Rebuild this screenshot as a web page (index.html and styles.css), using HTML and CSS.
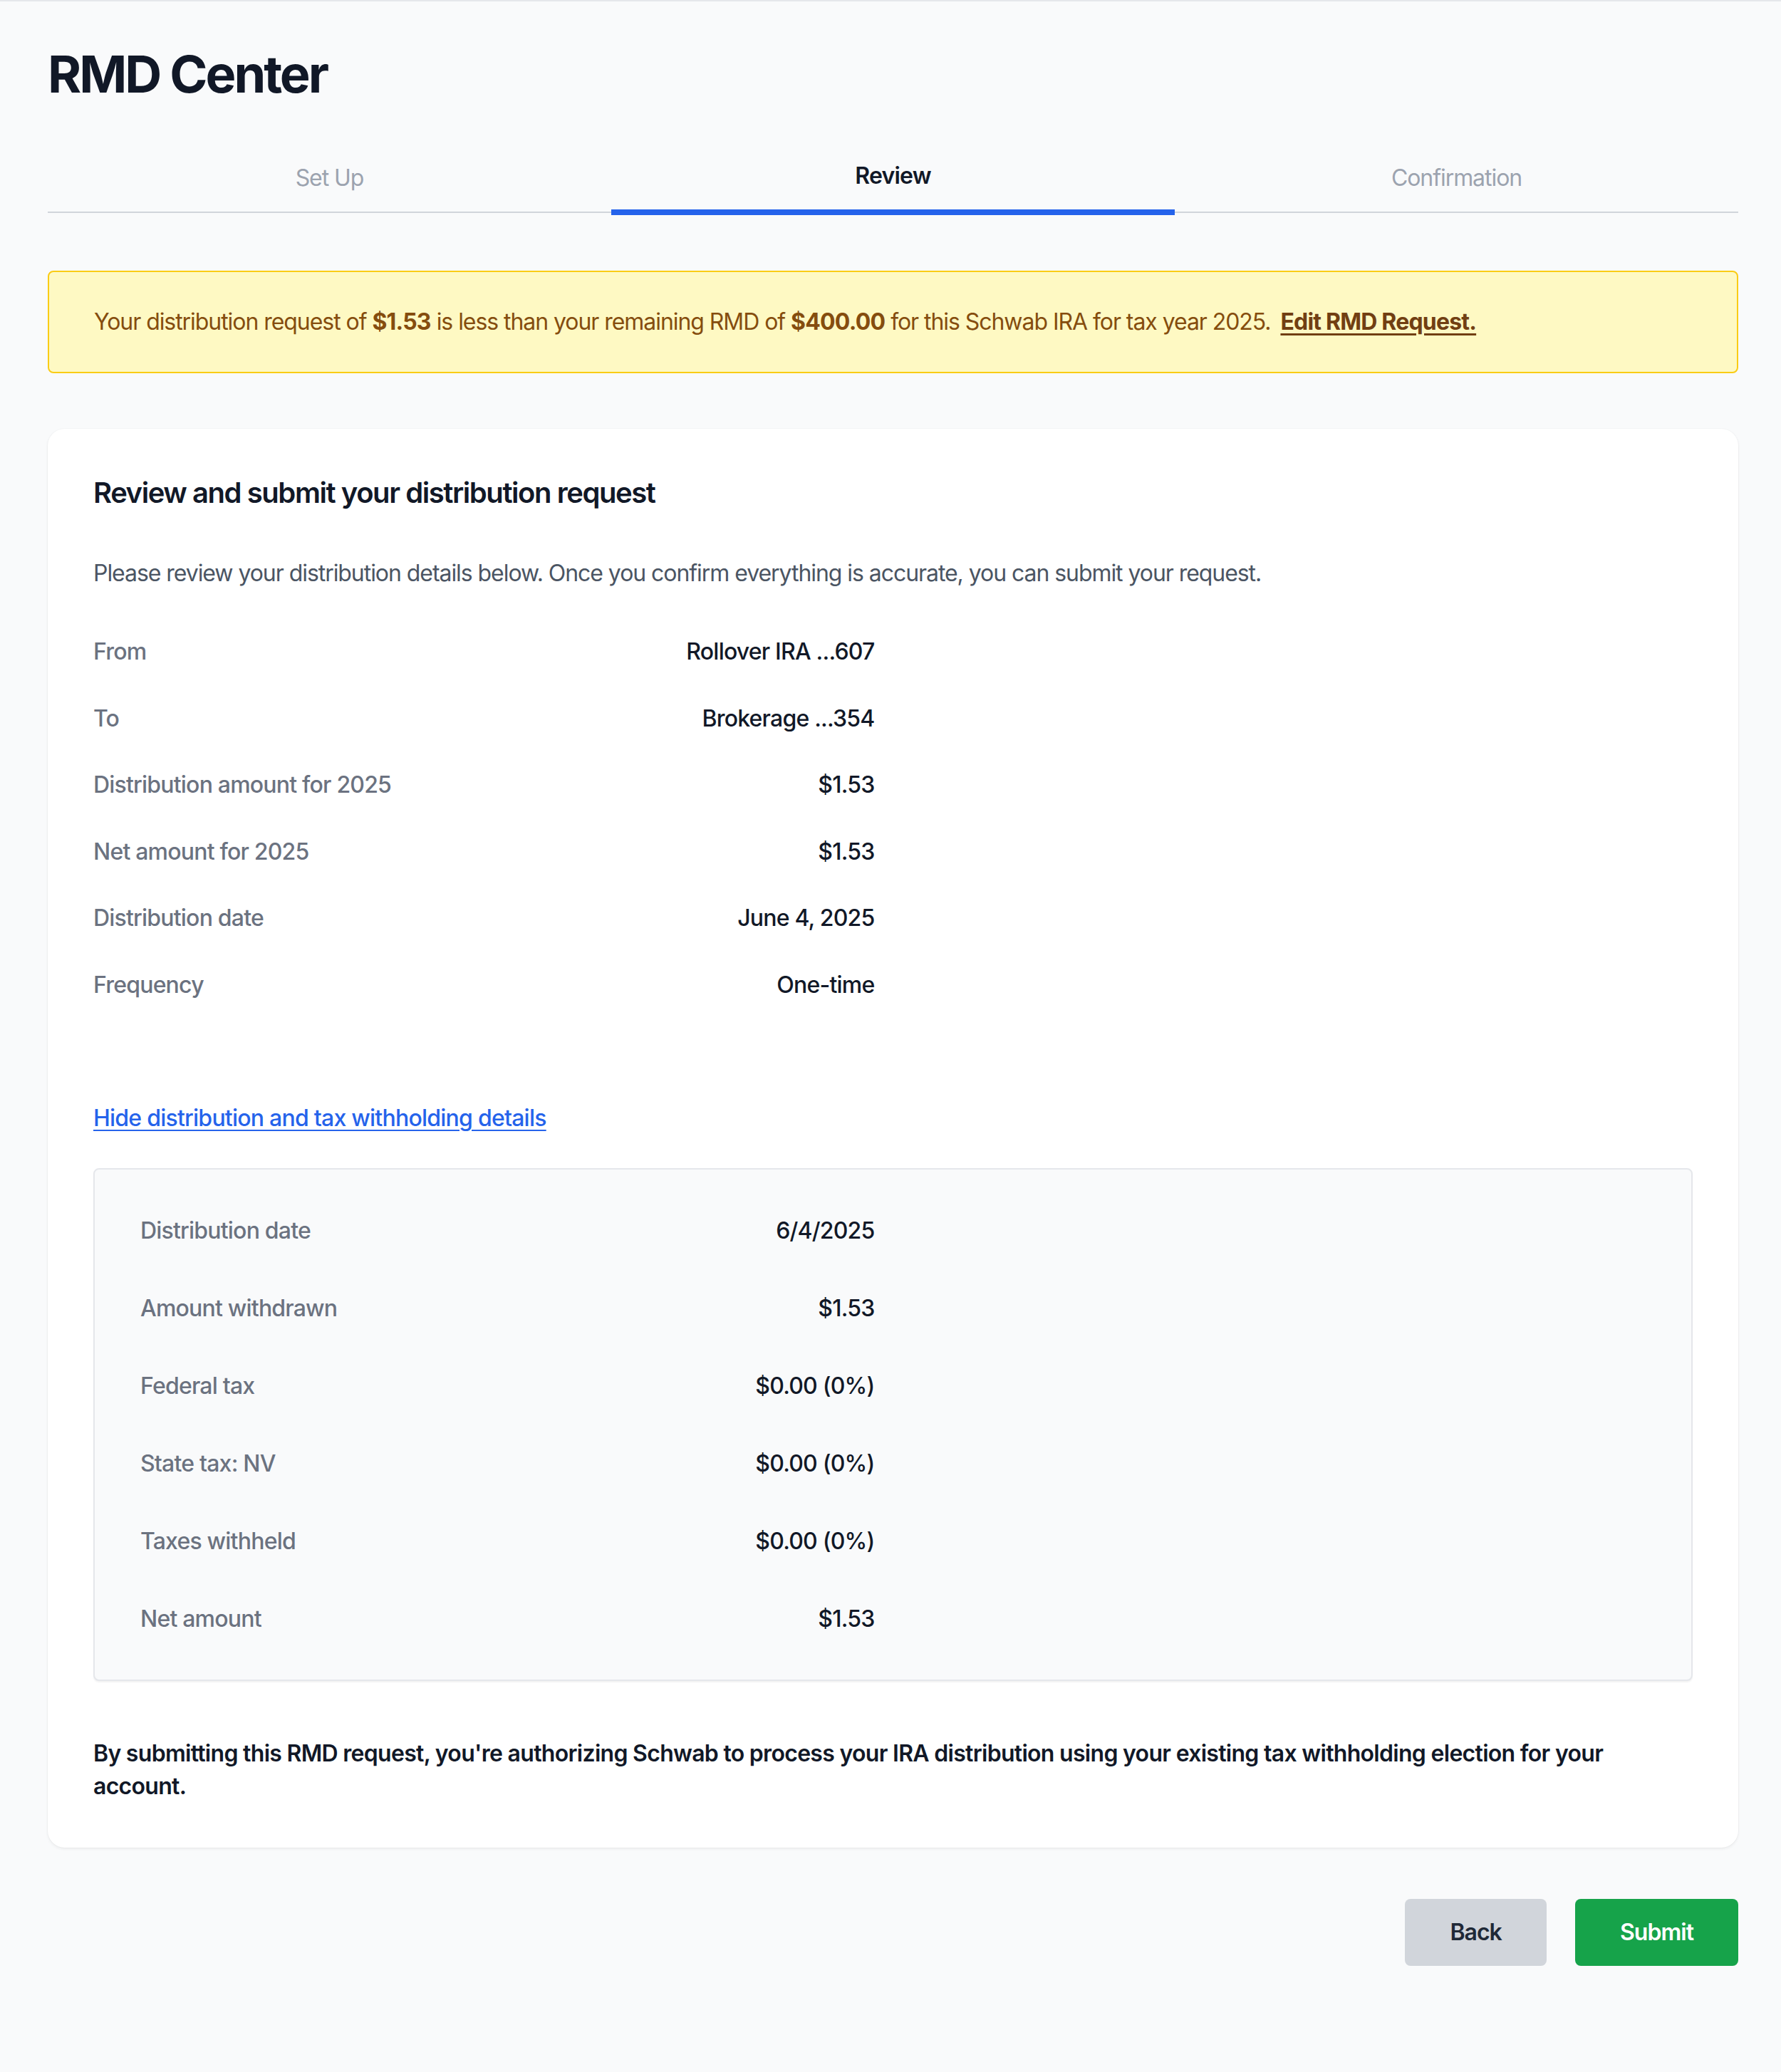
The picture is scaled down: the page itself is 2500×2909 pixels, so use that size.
FILE: index.html
```html
<!DOCTYPE html>
<html lang="en">

<head>
    <meta charset="UTF-8">
    <meta name="viewport" content="width=device-width, initial-scale=1.0">
    <title>RMD Center - Review</title>
    <link rel="stylesheet" href="styles.css">
</head>

<body>
    <div class="page">
        <h1 class="page-title">RMD Center</h1>

        <nav class="steps">
            <div class="step">Set Up</div>
            <div class="step step-active">Review</div>
            <div class="step">Confirmation</div>
        </nav>

        <div class="alert">
            Your distribution request of <strong>$1.53</strong> is less than your remaining RMD of
            <strong>$400.00</strong> for this Schwab IRA for tax year 2025.
            <a href="#" class="alert-link">Edit RMD Request.</a>
        </div>

        <section class="card">
            <h2 class="card-title">Review and submit your distribution request</h2>
            <p class="intro">Please review your distribution details below. Once you confirm everything is accurate, you can submit your request.</p>

            <dl class="summary">
                <div class="summary-row"><dt>From</dt><dd>Rollover IRA ...607</dd></div>
                <div class="summary-row"><dt>To</dt><dd>Brokerage ...354</dd></div>
                <div class="summary-row"><dt>Distribution amount for 2025</dt><dd>$1.53</dd></div>
                <div class="summary-row"><dt>Net amount for 2025</dt><dd>$1.53</dd></div>
                <div class="summary-row"><dt>Distribution date</dt><dd>June 4, 2025</dd></div>
                <div class="summary-row"><dt>Frequency</dt><dd>One-time</dd></div>
            </dl>

            <p class="toggle"><a href="#" class="toggle-link">Hide distribution and tax withholding details</a></p>

            <div class="details">
                <dl class="summary summary-tax">
                    <div class="summary-row"><dt>Distribution date</dt><dd>6/4/2025</dd></div>
                    <div class="summary-row"><dt>Amount withdrawn</dt><dd>$1.53</dd></div>
                    <div class="summary-row"><dt>Federal tax</dt><dd>$0.00 (0%)</dd></div>
                    <div class="summary-row"><dt>State tax: NV</dt><dd>$0.00 (0%)</dd></div>
                    <div class="summary-row"><dt>Taxes withheld</dt><dd>$0.00 (0%)</dd></div>
                    <div class="summary-row"><dt>Net amount</dt><dd>$1.53</dd></div>
                </dl>
            </div>

            <p class="disclaimer">By submitting this RMD request, you're authorizing Schwab to process your IRA distribution using your existing tax withholding election for your account.</p>
        </section>

        <div class="actions">
            <button class="btn btn-back">Back</button>
            <button class="btn btn-submit">Submit</button>
        </div>
    </div>
</body>

</html>
```

FILE: styles.css
```css
body {
    margin: 0;
    background-color: #f9fafb;
    font-family: Inter, "Liberation Sans", sans-serif;
    font-size: 32px;
    line-height: 48px;
    letter-spacing: -0.033em;
    color: #111827;
}

.page {
    border-top: 2px solid #e5e7eb;
    padding: 62px 60px 148px 67px;
}

.page-title {
    margin: 0 0 79px;
    font-size: 72px;
    line-height: 80px;
    font-weight: 700;
    letter-spacing: -0.042em;
}

/* step tabs */
.steps {
    display: flex;
    align-items: flex-end;
}

.step {
    flex: 1;
    text-align: center;
    padding-bottom: 23px;
    border-bottom: 2px solid #d1d5db;
    color: #9ca3af;
}

.step-active {
    border-bottom: 8px solid #2563eb;
    margin-bottom: -3px;
    color: #111827;
    font-weight: 600;
    letter-spacing: -0.025em;
}

/* warning banner */
.alert {
    margin-top: 81px;
    padding: 46px 63px;
    background-color: #fef9c3;
    border: 2px solid #facc15;
    border-radius: 8px;
    color: #854d0e;
}

.alert strong {
    font-weight: 700;
    letter-spacing: -0.025em;
}

.alert-link {
    margin-left: 6px;
    color: #713f12;
    font-weight: 700;
    letter-spacing: -0.025em;
    text-decoration: underline;
    text-decoration-thickness: 3px;
    text-underline-offset: 5px;
}

/* review card */
.card {
    margin-top: 78px;
    padding: 62px 64px 63px;
    background-color: #ffffff;
    border-radius: 24px;
    box-shadow: 0 2px 4px rgba(0, 0, 0, 0.06), 0 0 0 1px rgba(0, 0, 0, 0.02);
}

.card-title {
    margin: 0;
    font-size: 40px;
    line-height: 56px;
    font-weight: 600;
    letter-spacing: -0.036em;
}

.intro {
    margin: 61px 0 0;
    color: #4b5563;
}

.summary {
    display: flex;
    flex-direction: column;
    gap: 45.5px;
    width: calc(50% - 26px);
    margin: 62px 0 0;
}

.summary-row {
    display: flex;
    justify-content: space-between;
    font-weight: 500;
    letter-spacing: -0.025em;
}

.summary-row dt {
    color: #6b7280;
}

.summary-row dd {
    margin: 0;
    color: #111827;
}

.toggle {
    margin: 139px 0 0;
}

.toggle-link {
    color: #2563eb;
    font-weight: 500;
    letter-spacing: -0.024em;
    text-decoration: underline;
    text-decoration-thickness: 2px;
    text-underline-offset: 5px;
}

.details {
    margin-top: 46.6px;
    padding: 62px 64px 61px;
    background-color: #f9fafb;
    border: 2px solid #e5e7eb;
    border-radius: 8px;
    box-shadow: 0 2px 2px rgba(0, 0, 0, 0.05);
}

.summary-tax {
    margin: 0;
    gap: 61px;
}

.disclaimer {
    margin: 79px 0 0;
    line-height: 46px;
    font-weight: 600;
    letter-spacing: -0.022em;
}

/* buttons */
.actions {
    display: flex;
    justify-content: flex-end;
    gap: 40px;
    margin-top: 72px;
}

.btn {
    padding: 23px 63px;
    border: none;
    border-radius: 8px;
    font-family: inherit;
    font-size: 32px;
    line-height: 48px;
    font-weight: 600;
    letter-spacing: -0.03em;
    cursor: pointer;
}

.btn-back {
    background-color: #d1d5db;
    color: #1f2937;
}

.btn-submit {
    background-color: #16a34a;
    color: #ffffff;
}
```
